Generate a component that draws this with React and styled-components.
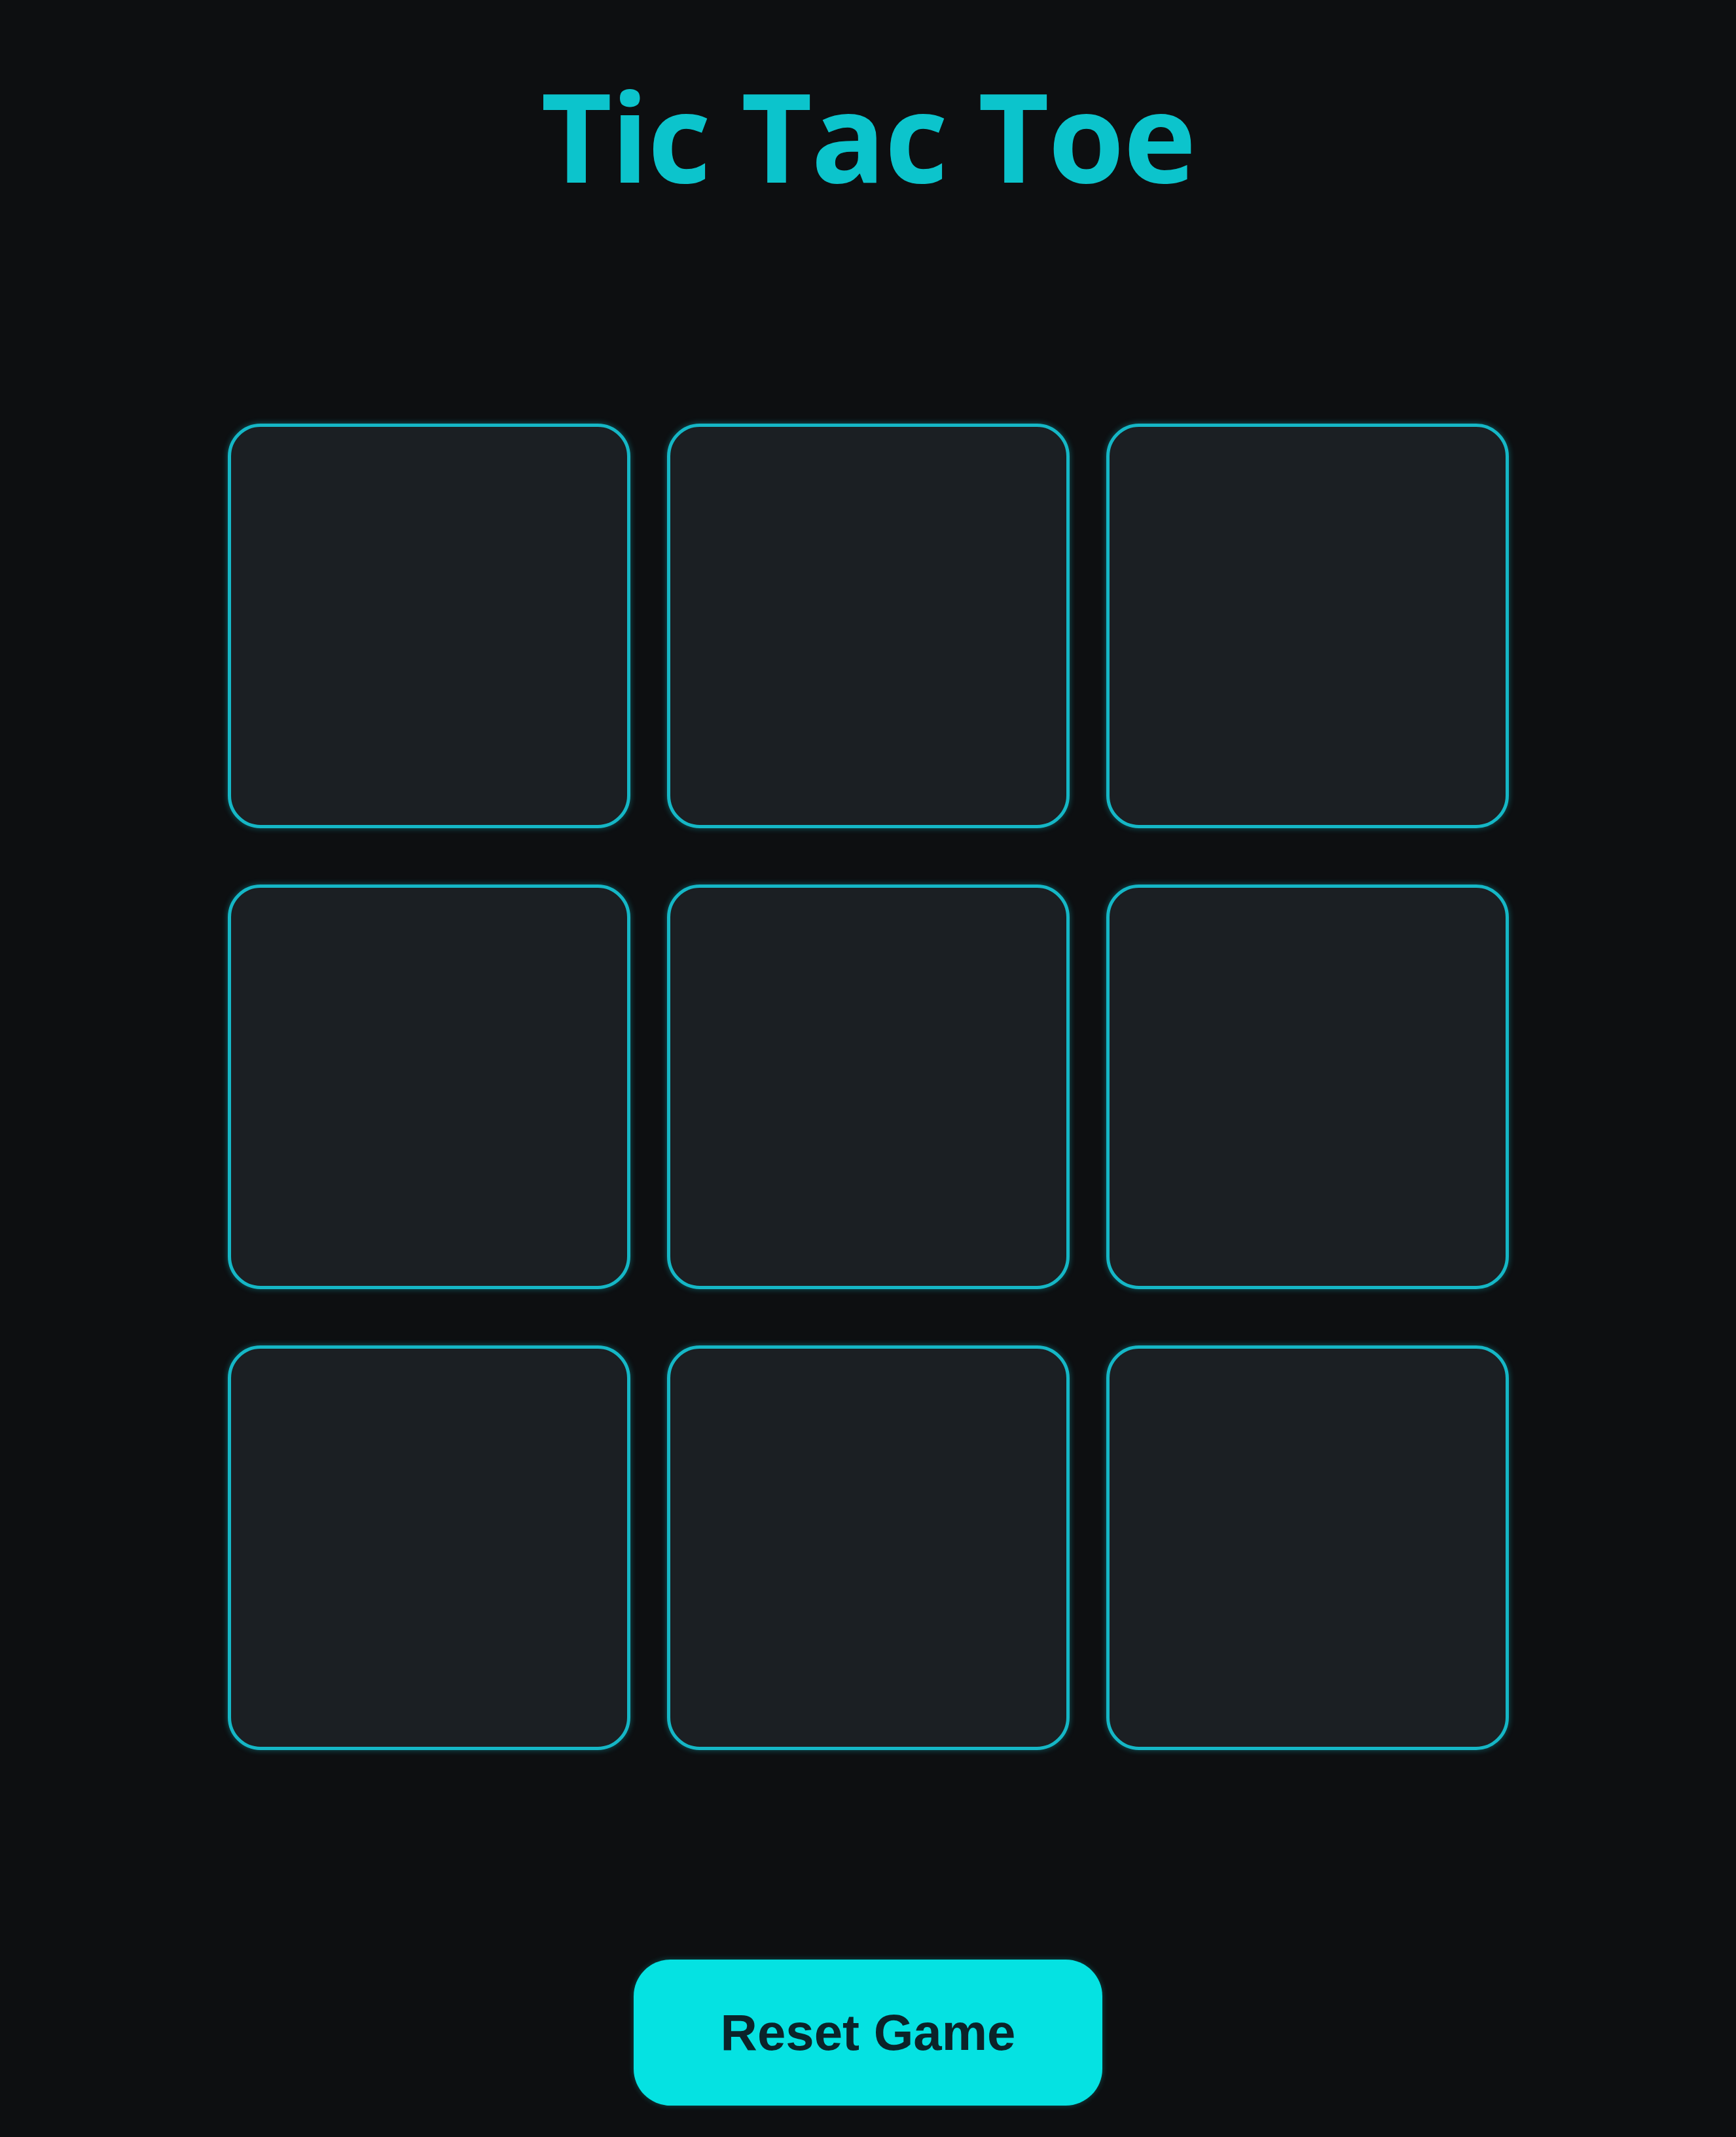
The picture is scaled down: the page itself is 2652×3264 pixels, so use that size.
import React, { useState } from 'react';
import styled, { createGlobalStyle } from 'styled-components';

const GlobalStyle = createGlobalStyle`
  html, body {
    margin: 0;
    padding: 0;
    background-color: #0d0f11;
  }
`;

const Page = styled.main`
  min-height: 3264px;
  display: flex;
  flex-direction: column;
  align-items: center;
  box-sizing: border-box;
  padding-top: 98px;
`;

const Title = styled.h1`
  margin: 0;
  font-family: "Open Sans", "Noto Sans", sans-serif;
  font-weight: 700;
  font-size: 188px;
  line-height: 1.15;
  color: #0cc4cc;
  letter-spacing: -1.5px;
`;

const Board = styled.section`
  display: grid;
  grid-template-columns: repeat(3, 615px);
  grid-auto-rows: 618px;
  gap: 86px 56px;
  margin-top: 333px;
`;

const Cell = styled.button`
  box-sizing: border-box;
  border: 5px solid #15b7c6;
  border-radius: 50px;
  background-color: #1b1f23;
  box-shadow: 0 0 10px rgba(21, 183, 198, 0.45);
  cursor: pointer;
  font-family: "Open Sans", sans-serif;
  font-size: 300px;
  font-weight: 700;
  color: ${({ $mark }) => ($mark === 'X' ? '#0cc4cc' : '#e8e8e8')};
  padding: 0;
`;

const ResetButton = styled.button`
  margin-top: 320px;
  width: 716px;
  height: 223px;
  border: none;
  border-radius: 56px;
  background-color: #05e2e2;
  color: #0b2329;
  font-family: "Liberation Sans", Arial, sans-serif;
  font-weight: 700;
  font-size: 78px;
  cursor: pointer;
  box-shadow: 0 0 8px rgba(5, 226, 226, 0.3);
`;

export default function App() {
  const [cells, setCells] = useState(Array(9).fill(null));
  const [xNext, setXNext] = useState(true);

  const play = (i) => {
    if (cells[i]) return;
    const next = cells.slice();
    next[i] = xNext ? 'X' : 'O';
    setCells(next);
    setXNext(!xNext);
  };

  const reset = () => {
    setCells(Array(9).fill(null));
    setXNext(true);
  };

  return (
    <>
      <GlobalStyle />
      <Page>
        <Title>Tic Tac Toe</Title>
        <Board>
          {cells.map((c, i) => (
            <Cell key={i} $mark={c} onClick={() => play(i)}>
              {c}
            </Cell>
          ))}
        </Board>
        <ResetButton onClick={reset}>Reset Game</ResetButton>
      </Page>
    </>
  );
}
